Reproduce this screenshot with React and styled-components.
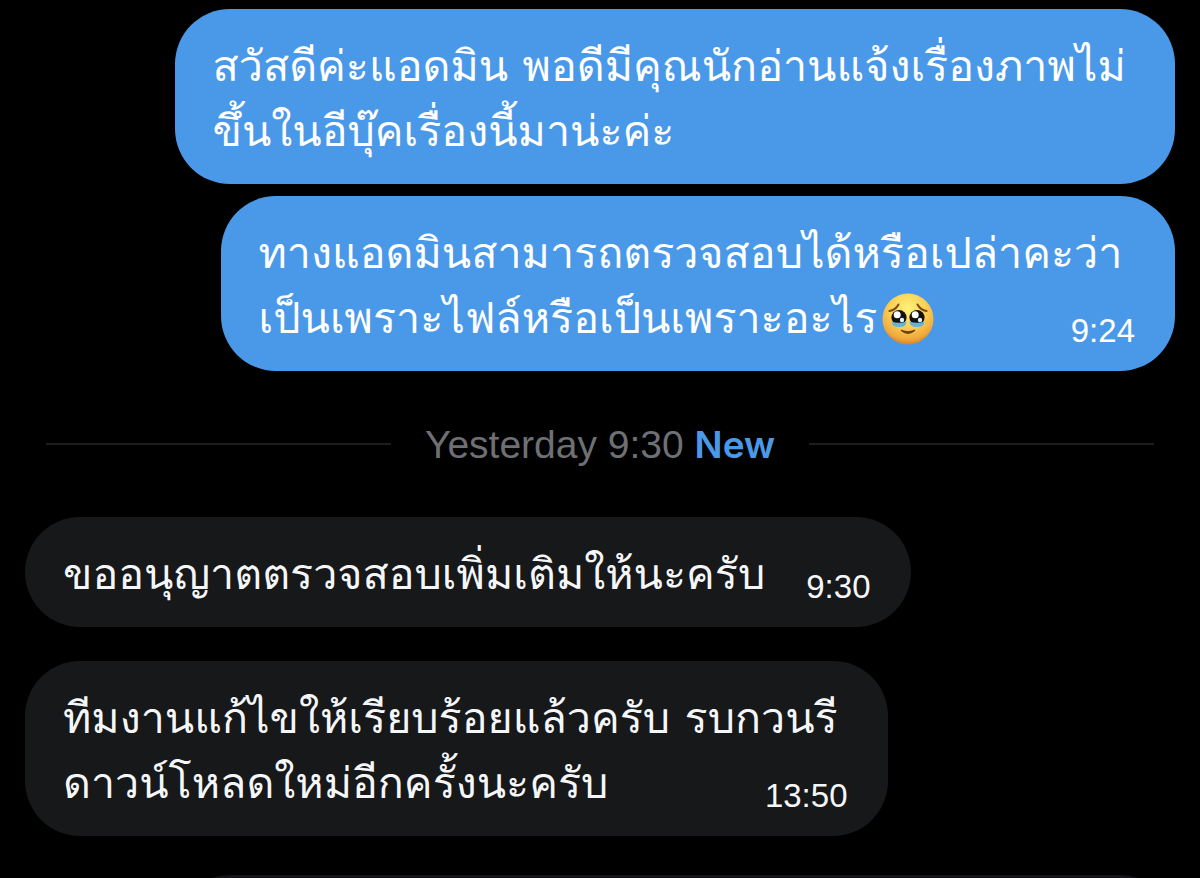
import React from "react";
import styled, { createGlobalStyle } from "styled-components";

const GlobalStyle = createGlobalStyle`
  * { box-sizing: border-box; }
  body {
    margin: 0;
    background: #000;
    overflow-x: hidden;
    font-family: "Liberation Sans", Arial, sans-serif;
  }
`;

const Conversation = styled.main`
  display: flex;
  flex-direction: column;
  padding: 9px 25px 0;
  height: 100vh;
  overflow: hidden;
`;

const Bubble = styled.article`
  flex: none;
  align-self: ${({ $sent }) => ($sent ? "flex-end" : "flex-start")};
  min-width: ${({ $share }) => $share}%;
  margin-bottom: ${({ $gap }) => $gap}px;
  padding: 25px 40px 20px 38px;
  border-radius: 55px;
  background: ${({ $sent }) => ($sent ? "#4a99e9" : "#16181a")};
  color: ${({ $sent }) => ($sent ? "#fff" : "#f5f6f8")};
`;

const Line = styled.p`
  display: flex;
  justify-content: space-between;
  gap: 22px;
  margin: 0;
  font-family: Loma, "Noto Sans Thai Looped", "Noto Sans Thai", sans-serif;
  font-size: 43px;
  line-height: 65px;
  height: 65px;
  white-space: nowrap;
`;

const Phrase = styled.span`
  display: flex;
  align-items: center;
`;

const Time = styled.time`
  padding-top: 23px;
  font-family: "Liberation Sans", Arial, sans-serif;
  font-size: 33px;
  line-height: 43px;
`;

const Divider = styled.div`
  flex: none;
  display: flex;
  align-items: center;
  gap: 34px;
  margin: 0 21px 42px;
  height: 62px;
  font-size: 39px;
  color: #6e7074;
  white-space: nowrap;

  &::before,
  &::after {
    content: "";
    flex: 1;
    height: 2px;
    background: #1c1d1f;
  }
`;

const NewMark = styled.strong`
  font-family: Inter, "Liberation Sans", sans-serif;
  font-size: 37px;
  font-weight: 600;
  color: #4a99e9;
`;

const Composer = styled.div`
  flex: none;
  height: 110px;
  margin: 0 0 0 150px;
  border-radius: 55px;
  background: #141416;
`;

const FaceIcon = styled.svg`
  width: 54px;
  height: 54px;
  margin-left: 4px;
`;

function PleadingFace() {
  return (
    <FaceIcon viewBox="0 0 54 54" role="img" aria-label="Face holding back tears">
      <defs>
        <radialGradient id="skin" cx="50%" cy="30%" r="70%">
          <stop offset="0" stopColor="#fff27c" />
          <stop offset="0.5" stopColor="#fbd055" />
          <stop offset="0.85" stopColor="#f0a93e" />
          <stop offset="1" stopColor="#d98324" />
        </radialGradient>
      </defs>
      <circle cx="27" cy="27" r="25.5" fill="url(#skin)" />
      <path d="M8.500 19Q14.500 18 17.500 12.500M45.500 19Q39.500 18 36.500 12.500" fill="none" stroke="#7a4a12" strokeWidth="2" strokeLinecap="round" />
      <circle cx="18" cy="25.500" r="7.600" fill="#15100f" />
      <circle cx="36" cy="25.500" r="7.600" fill="#15100f" />
      <path d="M10.500 29.500q3.500 1.200 7.500 1.200t7.500-1.200q0 5.500-7.500 5.500t-7.500-5.500ZM28.500 29.500q3.500 1.200 7.500 1.200t7.500-1.200q0 5.500-7.500 5.500t-7.500-5.500Z" fill="#63b4d6" />
      <circle cx="16.200" cy="22.800" r="3.500" fill="#fff" />
      <circle cx="34.200" cy="22.800" r="3.500" fill="#fff" />
      <circle cx="21" cy="28" r="2.200" fill="#e8f3f8" />
      <circle cx="39" cy="28" r="2.200" fill="#e8f3f8" />
      <path d="M20.500 38.500Q27 44 33.500 38.500Q27 41.500 20.500 38.500Z" fill="#71400f" stroke="#71400f" strokeWidth="1.600" strokeLinejoin="round" />
    </FaceIcon>
  );
}

function Message({ lines, time, sent, gap, share, face }) {
  return (
    <Bubble $sent={sent} $gap={gap} $share={share}>
      {lines.map((line, i) => {
        const last = i === lines.length - 1;
        return (
          <Line key={line}>
            <Phrase>
              {line}
              {last && face && <PleadingFace />}
            </Phrase>
            {last && time && <Time>{time}</Time>}
          </Line>
        );
      })}
    </Bubble>
  );
}

export default function App() {
  return (
    <>
      <GlobalStyle />
      <Conversation>
        <Message sent share={87} gap={12} lines={["สวัสดีค่ะแอดมิน พอดีมีคุณนักอ่านแจ้งเรื่องภาพไม่", "ขึ้นในอีบุ๊คเรื่องนี้มาน่ะค่ะ"]} />
        <Message sent face share={83} gap={42} time="9:24" lines={["ทางแอดมินสามารถตรวจสอบได้หรือเปล่าคะว่า", "เป็นเพราะไฟล์หรือเป็นเพราะอะไร"]} />
        <Divider>
          <span>Yesterday 9:30 <NewMark>New</NewMark></span>
        </Divider>
        <Message share={77} gap={34} time="9:30" lines={["ขออนุญาตตรวจสอบเพิ่มเติมให้นะครับ"]} />
        <Message share={75} gap={39} time="13:50" lines={["ทีมงานแก้ไขให้เรียบร้อยแล้วครับ รบกวนรี", "ดาวน์โหลดใหม่อีกครั้งนะครับ"]} />
        <Composer />
      </Conversation>
    </>
  );
}
